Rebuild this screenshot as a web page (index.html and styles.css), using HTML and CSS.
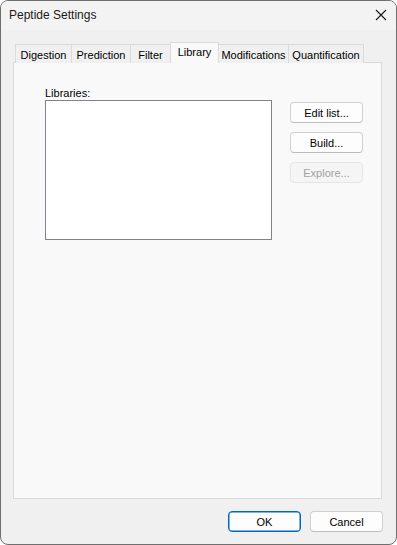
FILE: index.html
```html
<!DOCTYPE html>
<html>
<head>
<meta charset="utf-8">
<link rel="stylesheet" href="styles.css">
</head>
<body>
<div class="window">
  <div class="titlebar">
    <span class="title">Peptide Settings</span>
    <span class="close">
      <svg width="12" height="12" viewBox="0 0 12 12"><path d="M1 1 L11 11 M11 1 L1 11" stroke="#1a1a1a" stroke-width="1.1" fill="none"/></svg>
    </span>
  </div>
  <div class="content">
    <div class="tabs">
      <div class="tab t-dig">Digestion</div>
      <div class="tab t-pred">Prediction</div>
      <div class="tab t-filt">Filter</div>
      <div class="tab t-lib active">Library</div>
      <div class="tab t-mod">Modifications</div>
      <div class="tab t-quant">Quantification</div>
    </div>
    <div class="panel">
      <div class="lib-col">
        <div class="label">Libraries:</div>
        <div class="listbox"></div>
      </div>
      <div class="side-buttons">
        <button class="btn">Edit list...</button>
        <button class="btn">Build...</button>
        <button class="btn disabled">Explore...</button>
      </div>
    </div>
    <div class="footer">
      <button class="btn default">OK</button>
      <button class="btn">Cancel</button>
    </div>
  </div>
</div>
</body>
</html>
```
FILE: styles.css
```css
* { box-sizing: border-box; }
html, body { margin: 0; padding: 0; background: #ffffff; }
body { font-family: "Liberation Sans", Arial, sans-serif; font-size: 11px; color: #000; }

.window {
  width: 397px;
  height: 545px;
  border: 1px solid #6f6f6f;
  border-radius: 8px;
  background: #f0f0f0;
  display: flex;
  flex-direction: column;
  overflow: hidden;
}

.titlebar {
  height: 30px;
  background: #f3f3f3;
  display: flex;
  align-items: center;
  justify-content: space-between;
  padding: 0 9px 1px 8px;
}
.title { font-size: 12px; color: #1a1a1a; }
.close { display: flex; width: 12px; height: 12px; margin-right: 0; }

.content {
  flex: 1;
  display: flex;
  flex-direction: column;
  padding: 12px 14px 12px 12px;
}

.tabs {
  display: flex;
  align-items: flex-end;
  height: 21px;
  margin-bottom: -1px;
  padding-left: 2px;
  position: relative;
  z-index: 1;
}
.tab {
  height: 19px;
  border: 1px solid #dadada;
  border-bottom: none;
  background: #f0f0f0;
  color: #000;
  display: flex;
  align-items: center;
  justify-content: center;
  margin-left: -1px;
  padding-top: 1px;
  white-space: nowrap;
}
.tab:first-child { margin-left: 0; }
.t-dig { width: 57px; }
.t-pred { width: 60px; }
.t-filt { width: 41px; }
.t-lib { width: 49px; }
.t-mod { width: 71px; }
.t-quant { width: 76px; }
.tab.active {
  height: 21px;
  background: #f9f9f9;
  padding-top: 0;
  padding-bottom: 2px;
}

.panel {
  height: 437px;
  width: 369px;
  background: #f9f9f9;
  border: 1px solid #dadada;
  display: flex;
  gap: 18px;
  padding: 21px 0 0 31px;
}
.lib-col { display: flex; flex-direction: column; }
.label { height: 16px; line-height: 14px; padding-top: 2px; }
.listbox {
  width: 227px;
  height: 140px;
  background: #ffffff;
  border: 1px solid #82828f;
}

.side-buttons {
  display: flex;
  flex-direction: column;
  gap: 9px;
  padding-top: 18px;
}

.btn {
  width: 73px;
  height: 21px;
  font-family: "Liberation Sans", Arial, sans-serif;
  font-size: 11px;
  color: #000;
  background: #fdfdfd;
  border: 1px solid #d0d0d0;
  border-bottom-color: #bdbdbd;
  border-radius: 4px;
  padding: 0;
  margin: 0;
}
.btn.disabled {
  color: #a2a2a2;
  background: #f5f5f5;
  border-color: #e5e5e5;
}
.btn.default {
  border: 1px solid #0067c0;
  box-shadow: inset 0 0 0 0.5px #0067c0;
}

.footer {
  display: flex;
  justify-content: flex-end;
  gap: 9px;
  margin-top: 12px;
  margin-right: -1px;
}
```
